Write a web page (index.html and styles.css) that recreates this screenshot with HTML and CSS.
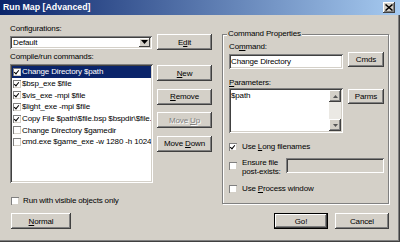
FILE: index.html
```html
<!DOCTYPE html>
<html lang="en">
<head>
  <meta charset="UTF-8" />
  <meta name="viewport" content="width=device-width, initial-scale=1" />
  <title>Run Map [Advanced]</title>
  <link rel="stylesheet" href="styles.css">
</head>
<body>
  <div class="window">
    <div class="titlebar">
      <span class="title">Run Map [Advanced]</span>
      <span class="close-btn">
        <svg width="8" height="7" viewBox="0 0 8 7"><path d="M0.5 0.5 L7.5 6.5 M7.5 0.5 L0.5 6.5" stroke="#000" stroke-width="1.5" fill="none"/></svg>
      </span>
    </div>

    <div class="client">
      <!-- left side: configurations + command list -->
      <div class="left-col">
        <div class="label">Configurations:</div>
        <div class="config-row">
          <div class="combo">
            <span class="combo-text">Default</span>
            <span class="combo-arrow">
              <svg width="7" height="4" viewBox="0 0 7 4"><path d="M0 0 H7 L3.5 4 Z" fill="#000"/></svg>
            </span>
          </div>
          <button class="btn side-btn">E<u>d</u>it</button>
        </div>
        <div class="label label-cmds">Compile/run commands:</div>
        <div class="list-row">
          <div class="listbox">
            <div class="list-item selected"><span class="check on"></span><span>Change Directory $path</span></div>
            <div class="list-item"><span class="check on"></span><span>$bsp_exe $file</span></div>
            <div class="list-item"><span class="check on"></span><span>$vis_exe -mpi $file</span></div>
            <div class="list-item"><span class="check on"></span><span>$light_exe -mpi $file</span></div>
            <div class="list-item"><span class="check on"></span><span>Copy File $path\$file.bsp $bspdir\$file.bsp</span></div>
            <div class="list-item"><span class="check"></span><span>Change Directory $gamedir</span></div>
            <div class="list-item"><span class="check"></span><span>cmd.exe $game_exe -w 1280 -h 1024</span></div>
          </div>
          <div class="side-buttons">
            <button class="btn side-btn"><u>N</u>ew</button>
            <button class="btn side-btn"><u>R</u>emove</button>
            <button class="btn side-btn disabled">Move <u>U</u>p</button>
            <button class="btn side-btn">Move <u>D</u>own</button>
          </div>
        </div>
        <div class="check-row visible-row"><span class="check"></span><span>Run with visible objects only</span></div>
        <button class="btn normal-btn"><u>N</u>ormal</button>
      </div>

      <!-- right side: command properties -->
      <div class="right-col">
        <div class="group">
          <span class="group-title">Command Properties</span>
          <div class="label">Co<u>m</u>mand:</div>
          <div class="field-row">
            <div class="field cmd-field">Change Directory</div>
            <button class="btn small-btn">Cmds</button>
          </div>
          <div class="label label-params"><u>P</u>arameters:</div>
          <div class="field-row">
            <div class="field params-field">
              <span class="params-text">$path</span>
              <div class="scrollbar">
                <span class="scroll-arrow">
                  <svg width="5" height="3" viewBox="0 0 5 3"><path d="M2.5 0 L5 3 H0 Z" fill="#555"/></svg>
                </span>
                <span class="scroll-track"></span>
                <span class="scroll-arrow">
                  <svg width="5" height="3" viewBox="0 0 5 3"><path d="M0 0 H5 L2.5 3 Z" fill="#555"/></svg>
                </span>
              </div>
            </div>
            <button class="btn small-btn parms-btn">Parms</button>
          </div>
          <div class="check-row long-row"><span class="check on"></span><span>Use <u>L</u>ong filenames</span></div>
          <div class="check-row ensure-row">
            <span class="check"></span>
            <span class="ensure-text">Ensure file<br>post-exists:</span>
            <div class="field ensure-field"></div>
          </div>
          <div class="check-row process-row"><span class="check"></span><span>Use <u>P</u>rocess window</span></div>
        </div>
        <div class="dialog-buttons">
          <button class="btn dialog-btn default-btn">Go!</button>
          <button class="btn dialog-btn">Cancel</button>
        </div>
      </div>
    </div>
  </div>
</body>
</html>
```

FILE: styles.css
```css
* {
  box-sizing: border-box;
  margin: 0;
  padding: 0;
}

html, body {
  width: 400px;
  height: 242px;
  overflow: hidden;
  background: #d4d0c8;
}

body {
  font-family: "Liberation Sans", Arial, sans-serif;
  font-size: 8px;
  letter-spacing: -0.15px;
  color: #000;
}

u {
  text-decoration: underline;
  text-underline-offset: 1px;
}

.window {
  width: 400px;
  height: 242px;
  background: #d4d0c8;
  box-shadow: inset -1px -1px #404040, inset -2px -2px #808080;
}

/* Title bar */
.titlebar {
  height: 15px;
  display: flex;
  align-items: center;
  justify-content: space-between;
  padding: 0 5px 0 3px;
  background: linear-gradient(to right, #0a246a, #a6caf0);
}

.title {
  color: #fff;
  font-weight: bold;
  font-size: 8.8px;
  letter-spacing: 0;
  line-height: 15px;
}

.close-btn {
  width: 12px;
  height: 11px;
  display: flex;
  align-items: center;
  justify-content: center;
  background: #d4d0c8;
  box-shadow: inset -1px -1px #404040, inset 1px 1px #fff, inset -2px -2px #808080;
}

/* Client area */
.client {
  display: flex;
  gap: 10px;
  padding: 9px 0 0 10px;
}

.left-col {
  width: 202px;
  display: flex;
  flex-direction: column;
}

.right-col {
  width: 167px;
  display: flex;
  flex-direction: column;
}

.label {
  line-height: 10px;
  height: 10px;
  white-space: nowrap;
}

.label-cmds {
  margin-top: 1px;
  height: 11px;
  line-height: 11px;
}

/* Buttons */
.btn {
  font: inherit;
  letter-spacing: inherit;
  color: #000;
  background: #d4d0c8;
  border: none;
  text-align: center;
  box-shadow: inset -1px -1px #404040, inset 1px 1px #fff, inset -2px -2px #808080;
}

.btn.disabled {
  color: #808080;
  text-shadow: 1px 1px #fff;
}

.side-btn {
  width: 55px;
  height: 16px;
}

.small-btn {
  width: 36px;
  height: 15px;
}

.dialog-btn {
  width: 54px;
  height: 16px;
}

.default-btn {
  border: 1px solid #000;
}

.normal-btn {
  width: 60px;
  height: 16px;
  margin: 7px 0 0 1px;
}

/* Sunken fields */
.field, .combo, .listbox {
  background: #fff;
  box-shadow: inset 1px 1px #808080, inset -1px -1px #fff, inset 2px 2px #404040, inset -2px -2px #d4d0c8;
}

.config-row {
  display: flex;
  align-items: center;
  gap: 5px;
  height: 16px;
}

.combo {
  width: 142px;
  height: 13px;
  display: flex;
  align-items: center;
  justify-content: space-between;
  padding: 2px;
}

.combo-text {
  padding-left: 1px;
  line-height: 9px;
}

.combo-arrow {
  width: 11px;
  height: 9px;
  display: flex;
  align-items: center;
  justify-content: center;
  background: #d4d0c8;
  box-shadow: inset -1px -1px #404040, inset 1px 1px #fff;
}

/* Command list */
.list-row {
  display: flex;
  gap: 4px;
  margin-top: 2px;
}

.listbox {
  width: 143px;
  height: 119px;
  padding: 2px;
  overflow: hidden;
}

.list-item {
  height: 11.7px;
  display: flex;
  align-items: center;
  gap: 1px;
  padding-left: 1px;
  white-space: nowrap;
  overflow: hidden;
}

.list-item.selected {
  background: #0a246a;
  color: #fff;
}

.side-buttons {
  display: flex;
  flex-direction: column;
  gap: 7.5px;
  padding-top: 1px;
}

/* Checkboxes */
.check {
  flex: none;
  width: 8px;
  height: 8px;
  background: #fff;
  box-shadow: inset 1px 1px #808080, inset -1px -1px #d4d0c8;
  position: relative;
}

.check.on::after {
  content: "";
  position: absolute;
  left: 2px;
  top: 1px;
  width: 2px;
  height: 4px;
  border: solid #000;
  border-width: 0 1.5px 1.5px 0;
  transform: rotate(40deg);
}

.check-row {
  display: flex;
  align-items: center;
  gap: 5px;
  height: 10px;
  line-height: 10px;
  white-space: nowrap;
}

.visible-row {
  margin: 13px 0 0 1px;
  gap: 4px;
}

/* Command properties group */
.group {
  position: relative;
  margin-top: 10px;
  height: 170px;
  border: 1px solid #808080;
  box-shadow: inset 1px 1px #fff, 1px 1px #fff;
  padding: 6px 4px 0 6px;
  display: flex;
  flex-direction: column;
}

.group-title {
  position: absolute;
  top: -6px;
  left: 4px;
  padding: 0 1px;
  line-height: 10px;
  background: #d4d0c8;
}

.group .label {
  height: 11px;
  line-height: 11px;
}

.label-params {
  margin-top: 8px;
}

.field-row {
  display: flex;
  align-items: flex-start;
  gap: 5px;
}

.field-row:first-of-type {
  margin-top: 2px;
}

.cmd-field {
  margin-top: 2px;
  width: 114px;
  height: 15px;
  padding: 0 2px;
  line-height: 15px;
  white-space: nowrap;
}

.params-field {
  width: 114px;
  height: 45px;
  padding: 2px;
  display: flex;
  justify-content: space-between;
}

.params-text {
  line-height: 11px;
}

.parms-btn {
  margin-top: 1px;
}

.scrollbar {
  width: 12px;
  display: flex;
  flex-direction: column;
}

.scroll-arrow {
  height: 12px;
  display: flex;
  align-items: center;
  justify-content: center;
  background: #d4d0c8;
  box-shadow: inset -1px -1px #404040, inset 1px 1px #fff, inset -2px -2px #808080;
}

.scroll-track {
  flex: 1;
  background: #ebe9e4;
}

.long-row {
  margin-top: 9px;
}

.ensure-row {
  margin-top: 6px;
  height: 18px;
  align-items: flex-start;
}

.ensure-row .check {
  margin-top: 4px;
}

.ensure-text {
  line-height: 9px;
}

.ensure-field {
  margin-left: auto;
  width: 98px;
  height: 15px;
  background: #d4d0c8;
}

.process-row {
  margin-top: 8px;
}

.dialog-buttons {
  display: flex;
  justify-content: flex-end;
  gap: 7px;
  margin-top: 9px;
}
```
